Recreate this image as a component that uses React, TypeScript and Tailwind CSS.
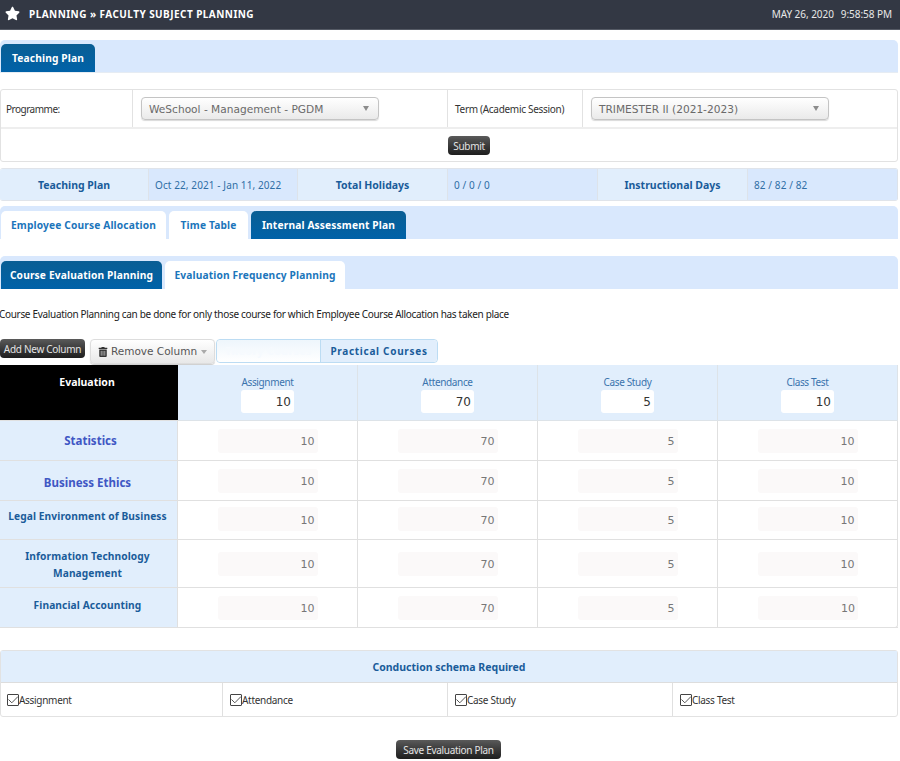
import { FaStar, FaTrashAlt } from "react-icons/fa";

const sans = "font-['Noto_Sans','Liberation_Sans',sans-serif]";
const wide = "font-['DejaVu_Sans',sans-serif]";

const columns = [
  { name: "Assignment", value: "10" },
  { name: "Attendance", value: "70" },
  { name: "Case Study", value: "5" },
  { name: "Class Test", value: "10" },
];

const rows = [
  { name: ["Statistics"], height: "h-10", nameClass: "text-[#3f57c4] text-[11.5px] pl-[4px] pt-[1px]", inputClass: "mt-2 mb-2 pt-[2px]" },
  { name: ["Business Ethics"], height: "h-10", nameClass: "text-[#3f57c4] text-[11.5px] pt-1 pr-[2px]", inputClass: "mt-2 mb-2 pt-[2px]" },
  { name: ["Legal Environment of Business"], height: "h-[39px]", nameClass: "text-[#1a5c9a] text-[10.2px] tracking-[0.1px] pb-[6px] pr-[2px]", inputClass: "mt-[6px] mb-2 pt-[4px]" },
  { name: ["Information Technology", "Management"], height: "h-12", nameClass: "text-[#1a5c9a] text-[10.2px] tracking-[0.1px] leading-[17px] pt-[3px] pr-[2px]", inputClass: "mt-3 mb-3 pt-[2px]" },
  { name: ["Financial Accounting"], height: "h-10", nameClass: "text-[#1a5c9a] text-[10.2px] tracking-[0.1px] pb-1 pr-[2px]", inputClass: "mt-2 mb-2 pt-[2px]" },
];

function Tab({ label, active, width }: { label: string; active?: boolean; width: string }) {
  return (
    <div
      className={`${width} h-7 pt-[2px] rounded-t-[5px] flex items-center justify-center text-[10.2px] font-bold tracking-[0.15px] ${sans} ${
        active ? "bg-linear-to-b from-[#0a5e94] to-[#0062a8] text-white" : "bg-white text-[#1b75bb]"
      }`}
    >
      {label}
    </div>
  );
}

function DarkButton({ label, className }: { label: string; className: string }) {
  return (
    <button
      className={`rounded-[4px] bg-linear-to-b from-[#5a5a5a] to-[#1e1e1e] text-[#e4e4e4] text-[10px] tracking-[-0.3px] pt-[1px] flex items-center justify-center ${sans} ${className}`}
    >
      {label}
    </button>
  );
}

function Select({ label }: { label: string }) {
  return (
    <div
      className={`w-[238px] h-[23px] rounded-[4px] border border-[#c4c4c4] bg-linear-to-b from-white to-[#eaeaea] shadow-[0_1px_1px_rgba(0,0,0,0.15)] flex items-center justify-between pl-[7px] pr-[9px] text-[10.6px] text-[#6a6a6a] ${wide}`}
    >
      <span className="pt-[3px]">{label}</span>
      <span className="w-0 h-0 border-l-[3.5px] border-r-[3.5px] border-t-[5px] border-l-transparent border-r-transparent border-t-[#8c8c8c]" />
    </div>
  );
}

function Check({ label, inset }: { label: string; inset: string }) {
  return (
    <div className={`h-full flex items-center text-[10px] tracking-[-0.3px] text-[#333333] border-r border-[#e0e0e0] last:border-r-0 ${sans} ${inset}`}>
      <span className="w-3 h-3 border border-[#444444] rounded-[1px] flex items-center justify-center shrink-0">
        <svg width="10" height="10" viewBox="0 0 10 10" fill="none">
          <path d="M0.5 4.5 L3.8 7.8 L10 1.5" stroke="#555555" strokeWidth="1" />
        </svg>
      </span>
      <span className="pt-[1px]">{label}</span>
    </div>
  );
}

export default function App() {
  return (
    <div className={`w-[900px] h-[761px] overflow-hidden bg-white ${sans}`}>
      <header className="h-[30px] bg-[#333844] flex items-center justify-between pl-[5px] pr-[8px] text-white border-b border-[#555a65]">
        <div className="flex items-center">
          <FaStar className="text-[15px] mb-[3px]" />
          <span className="ml-[9px] text-[10px] font-bold tracking-[0.45px]">PLANNING » FACULTY SUBJECT PLANNING</span>
        </div>
        <div className="text-[10px] tracking-[-0.05px] text-[#e8e8e8] flex gap-[7px]">
          <span>MAY 26, 2020</span>
          <span>9:58:58 PM</span>
        </div>
      </header>

      <main className="w-[898px]">
        <div className="mt-[10px] h-[33px] bg-[#d9e8fd] rounded-t-[5px] flex items-end pl-[1px] border-b border-[#e6ecf3]">
          <Tab label="Teaching Plan" active width="w-[94px]" />
        </div>

        <section className="mt-[16px] h-[73px] border border-[#e2e2e2] rounded-[3px] text-[10px] text-[#333333]">
          <div className="h-[39px] grid grid-cols-[132px_315px_135px_1fr] border-b-2 border-[#eeeeee]">
            <div className="flex items-center pl-[5px] pt-[2px] border-r border-[#e2e2e2] tracking-[-0.5px]">Programme:</div>
            <div className="flex items-center pl-[8px] border-r border-[#e2e2e2]">
              <Select label="WeSchool - Management - PGDM" />
            </div>
            <div className="flex items-center pl-[7px] pt-[2px] border-r border-[#e2e2e2] tracking-[-0.3px]">Term (Academic Session)</div>
            <div className="flex items-center pl-[8px]">
              <Select label="TRIMESTER II (2021-2023)" />
            </div>
          </div>
          <div className="flex pl-[447px] pt-[7px]">
            <DarkButton label="Submit" className="w-[42px] h-[19px]" />
          </div>
        </section>

        <section className="mt-[6px] h-[33px] border-t border-b border-[#e0e4ea] rounded-[3px] overflow-hidden grid grid-cols-[149px_149px_150px_150px_150px_1fr] text-[10px]">
          {[
            ["Teaching Plan", "Oct 22, 2021 - Jan 11, 2022"],
            ["Total Holidays", "0 / 0 / 0"],
            ["Instructional Days", "82 / 82 / 82"],
          ].flatMap(([label, value]) => [
            <div key={label} className="bg-[#e1eefc] flex items-center justify-center pt-[2px] font-bold text-[#1a5c9a] text-[10.5px] border-r border-[#dde3ea]">
              {label}
            </div>,
            <div key={value} className="bg-[#d9e8fd] flex items-center pl-[6px] pt-[2px] text-[#2f6ea5] tracking-[0.1px] border-r border-[#dde3ea]">
              {value}
            </div>,
          ])}
        </section>

        <div className="mt-[5px] h-[33px] bg-[#d9e8fd] rounded-t-[5px] flex items-end gap-[3px] pl-[1px]">
          <Tab label="Employee Course Allocation" width="w-[165px]" />
          <Tab label="Time Table" width="w-[79px]" />
          <Tab label="Internal Assessment Plan" active width="w-[155px]" />
        </div>

        <div className="mt-[17px] h-[33px] bg-[#d9e8fd] rounded-t-[5px] flex items-end gap-[3px] pl-[1px]">
          <Tab label="Course Evaluation Planning" active width="w-[161px]" />
          <Tab label="Evaluation Frequency Planning" width="w-[180px]" />
        </div>

        <p className="mt-[18px] h-[14px] leading-[14px] text-[10px] tracking-[-0.32px] text-[#222222] whitespace-nowrap ml-[-1px]">
          Course Evaluation Planning can be done for only those course for which Employee Course Allocation has taken place
        </p>

        <div className="mt-[18px] h-[26px] flex items-start">
          <DarkButton label="Add New Column" className="w-[85px] h-[19px]" />
          <div className={`ml-[5px] w-[125px] h-[25px] rounded-[4px] border border-[#dddddd] bg-linear-to-b from-white to-[#e8e8e8] shadow-[0_1px_1px_rgba(0,0,0,0.2)] flex items-center justify-center text-[10.5px] text-[#555555] ${wide}`}>
            <FaTrashAlt className="text-[10px] text-[#333333] mr-[3px]" />
            <span>Remove Column</span>
            <span className="ml-[4px] w-0 h-0 border-l-[3.5px] border-r-[3.5px] border-t-[4px] border-l-transparent border-r-transparent border-t-[#aaaaaa]" />
          </div>
          <div className="ml-[1px] h-6 flex rounded-[4px] border border-[#bcdcf3] text-[10px] font-bold tracking-[0.7px]">
            <div className="w-[104px] h-full flex items-center justify-center bg-linear-to-b from-[#eef6fc] to-white text-[#f6fafe] border-r border-[#bcdcf3] rounded-l-[4px]">
              Theory Courses
            </div>
            <div className="w-[116px] h-full flex items-center justify-center bg-[#e1eefc] text-[#1a5c9a] rounded-r-[4px]">
              Practical Courses
            </div>
          </div>
        </div>

        <section className="h-[263px] border-b border-r border-[#e2e2e2] rounded-[3px] grid grid-cols-[178px_repeat(4,180px)] content-start">
          <div className="h-[56px] bg-black text-white text-[10.5px] font-bold text-center pt-[10px] border-b border-[#e0e0e0] pr-[4px]">
            Evaluation
          </div>
          {columns.map((c) => (
            <div key={c.name} className="h-[56px] bg-[#e1eefc] border-b border-r border-[#dde3e8] flex flex-col items-center pt-[11px] last:border-r-0">
              <span className="h-[13px] leading-[13px] text-[10px] tracking-[-0.35px] text-[#3a73ad]">{c.name}</span>
              <div className={`mt-[1px] w-[53px] h-[23px] bg-white rounded-[3px] flex items-center justify-end pr-[3px] text-[12px] text-[#333333] ${wide}`}>
                {c.value}
              </div>
            </div>
          ))}
          {rows.flatMap((r) => [
            <div
              key={r.name[0]}
              className={`${r.height} bg-[#e1eefc] border-b border-[#e0e0e0] border-r flex flex-col items-center justify-center font-bold text-center ${r.nameClass}`}
            >
              {r.name.map((n) => (
                <div key={n}>{n}</div>
              ))}
            </div>,
            ...columns.map((c) => (
              <div key={r.name[0] + c.name} className={`${r.height} border-b border-r border-[#e0e0e0] flex justify-center items-start last:border-r-0`}>
                <div className={`w-[100px] h-6 bg-[#fbf9f9] rounded-[3px] flex items-center justify-end pr-[3px] text-[11px] text-[#777777] ${wide} ${r.inputClass}`}>
                  {c.value}
                </div>
              </div>
            )),
          ])}
        </section>

        <section className="mt-[22px] h-[67px] border border-[#e2e2e2] rounded-[3px]">
          <div className="h-8 bg-[#e1eefc] border-b border-[#dddddd] flex items-center justify-center pt-[2px] font-bold text-[10.5px] text-[#1a5c9a]">
            Conduction schema Required
          </div>
          <div className="h-[33px] grid grid-cols-[222px_225px_225px_1fr]">
            <Check label="Assignment" inset="pl-[6px]" />
            <Check label="Attendance" inset="pl-[7px]" />
            <Check label="Case Study" inset="pl-[7px]" />
            <Check label="Class Test" inset="pl-[7px]" />
          </div>
        </section>

        <div className="mt-[23px] flex justify-center">
          <DarkButton label="Save Evaluation Plan" className="w-[105px] h-[19px] ml-[-1px]" />
        </div>
      </main>
    </div>
  );
}
